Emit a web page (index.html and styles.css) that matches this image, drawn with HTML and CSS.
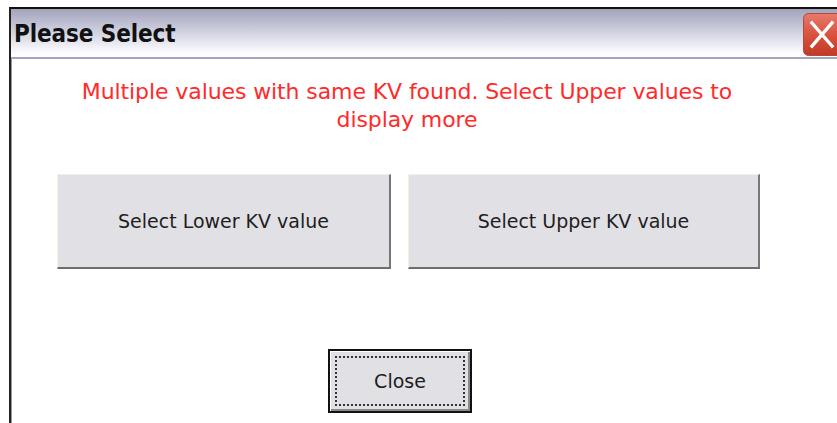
FILE: index.html
```html
<!DOCTYPE html>
<html lang="en">
<head>
<meta charset="utf-8">
<title>Please Select</title>
<link rel="stylesheet" href="styles.css">
</head>
<body>
  <div class="window">
    <div class="titlebar">
      <span class="title">Please Select</span>
      <button class="close-x" aria-label="Close">
        <svg width="36" height="43" viewBox="0 0 36 43">
          <defs>
            <linearGradient id="xbg" x1="0" y1="0" x2="0" y2="1">
              <stop offset="0" stop-color="#e77a6c"/>
              <stop offset="0.5" stop-color="#d9533f"/>
              <stop offset="1" stop-color="#c23a26"/>
            </linearGradient>
          </defs>
          <rect x="0.5" y="0.5" width="40" height="42" rx="5" fill="url(#xbg)" stroke="#b04a3c"/>
          <path d="M9 10 L29 33 M29 10 L9 33" stroke="#fff" stroke-width="3.4" stroke-linecap="square"/>
        </svg>
      </button>
    </div>
    <div class="content">
      <p class="message">Multiple values with same KV found. Select Upper values to<br>display more</p>
      <div class="choices">
        <button class="btn btn-lower">Select Lower KV value</button>
        <button class="btn btn-upper">Select Upper KV value</button>
      </div>
      <div class="footer">
        <button class="btn btn-close"><span class="focus">Close</span></button>
      </div>
    </div>
  </div>
</body>
</html>
```

FILE: styles.css
```css
html, body {
  margin: 0;
  padding: 0;
  background: #fff;
  overflow: hidden;
}

body {
  width: 837px;
  height: 423px;
  font-family: "DejaVu Sans", sans-serif;
}

.window {
  margin: 7px 0 0 9px;
  width: 830px;
  height: 416px;
  border-top: 2px solid #111;
  border-left: 2px solid #222;
  box-shadow: inset 1px 0 0 #9a9a9a;
  box-sizing: border-box;
}

.titlebar {
  height: 50px;
  box-sizing: border-box;
  border-bottom: 2px solid #a5a6ba;
  background: linear-gradient(#a3a4bc 0%, #bfc0d3 30%, #e2e2ed 65%, #fbfbfd 90%, #ffffff 100%);
  display: flex;
  align-items: flex-start;
  justify-content: space-between;
}

.title {
  font-family: "DejaVu Sans Condensed", "DejaVu Sans", sans-serif;
  font-weight: bold;
  font-size: 24px;
  color: #111;
  margin: 11px 0 0 3px;
  letter-spacing: -0.1px;
}

.close-x {
  margin: 4px 0 0 0;
  padding: 0;
  border: 0;
  background: none;
  width: 36px;
  height: 43px;
  display: block;
}

.close-x svg {
  display: block;
}

.content {
  width: 792px;
}

.message {
  margin: 19px 0 0 0;
  text-align: center;
  color: #ff2a2a;
  font-size: 22px;
  line-height: 28px;
  letter-spacing: -0.1px;
}

.choices {
  display: flex;
  gap: 17px;
  padding-left: 46px;
  margin-top: 40px;
}

.btn {
  font-family: "DejaVu Sans", sans-serif;
  font-size: 19px;
  color: #1e1e1e;
  background: #e1e0e5;
  box-sizing: border-box;
  border-style: solid;
  border-width: 1px 2px 2px 1px;
  border-color: #f3f1e4 #777 #6e6e6e #f3f1e4;
  padding: 0;
  margin: 0;
}

.btn-lower {
  width: 334px;
  height: 95px;
}

.btn-upper {
  width: 352px;
  height: 95px;
}

.footer {
  padding-left: 317px;
  margin-top: 80px;
}

.btn-close {
  width: 144px;
  height: 64px;
  border: 2px solid #111;
  box-shadow: inset 1px 1px 0 #fff, inset -2px -2px 0 #8a8a8a;
  display: flex;
  padding: 5px;
}

.focus {
  flex: 1;
  border: 2px dotted #333;
  display: flex;
  align-items: center;
  justify-content: center;
}
```
